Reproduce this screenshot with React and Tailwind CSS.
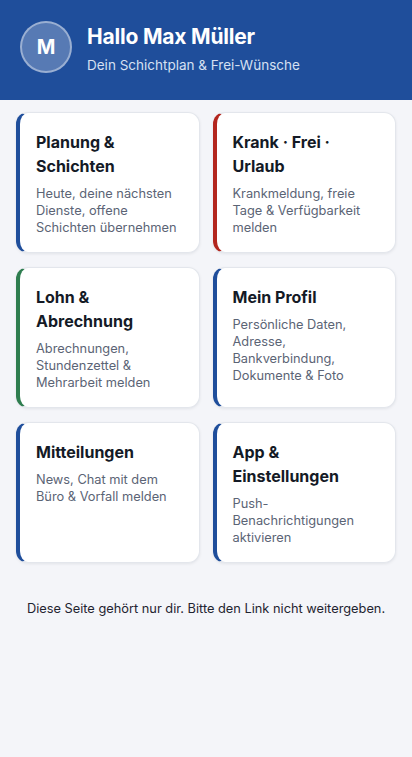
import React from 'react'

const CARDS = [
  {
    title: 'Planung & Schichten',
    text: 'Heute, deine nächsten Dienste, offene Schichten übernehmen',
    accent: 'border-l-[#1f4e9b]',
  },
  {
    title: 'Krank · Frei · Urlaub',
    text: 'Krankmeldung, freie Tage & Verfügbarkeit melden',
    accent: 'border-l-[#b3261e]',
  },
  {
    title: 'Lohn & Abrechnung',
    text: 'Abrechnungen, Stundenzettel & Mehrarbeit melden',
    accent: 'border-l-[#2e7d4f]',
  },
  {
    title: 'Mein Profil',
    text: 'Persönliche Daten, Adresse, Bankverbindung, Dokumente & Foto',
    accent: 'border-l-[#1f4e9b]',
  },
  {
    title: 'Mitteilungen',
    text: 'News, Chat mit dem Büro & Vorfall melden',
    accent: 'border-l-[#1f4e9b]',
  },
  {
    title: 'App & Einstellungen',
    text: 'Push-Benachrichtigungen aktivieren',
    accent: 'border-l-[#1f4e9b]',
  },
]

export default function App() {
  return (
    <div
      className="min-h-[757px] bg-[#f4f5f9]"
      style={{ fontFamily: 'Inter, "Noto Sans", sans-serif' }}
    >
      {/* ── Header ── */}
      <header className="h-[100px] bg-[#1f4e9b] flex items-center gap-[15px] px-5 pb-1.5">
        <div className="w-[52px] h-[52px] rounded-full bg-white/25 border-2 border-white/40 flex items-center justify-center shrink-0">
          <span className="text-white text-xl font-bold">M</span>
        </div>
        <div className="min-w-0 pt-1">
          <h1 className="text-white text-[21px] font-bold leading-7 tracking-[-0.2px]">
            Hallo Max Müller
          </h1>
          <p className="text-[#d6e0f2] text-[13.5px] mt-1">Dein Schichtplan &amp; Frei-Wünsche</p>
        </div>
      </header>

      {/* ── Tiles ── */}
      <div className="grid grid-cols-2 gap-x-[13px] gap-y-[14px] px-4 pt-3">
        {CARDS.map((card, idx) => (
          <button
            key={idx}
            className={`text-left bg-white rounded-xl border border-[#e3e6ec] border-l-4 ${card.accent} shadow-[0_1px_3px_rgba(15,23,42,0.08)] pl-4 pr-3 pt-[17px] pb-4 min-h-[141px] flex flex-col`}
          >
            <h2 className="text-[16px] font-bold leading-6 text-[#141a26]">{card.title}</h2>
            <p className="text-[12.8px] leading-[17px] text-[#5b6475] mt-[7px]">{card.text}</p>
          </button>
        ))}
      </div>

      <p className="text-center text-[12.8px] text-[#1f2430] mt-[36px]">
        Diese Seite gehört nur dir. Bitte den Link nicht weitergeben.
      </p>
    </div>
  )
}
